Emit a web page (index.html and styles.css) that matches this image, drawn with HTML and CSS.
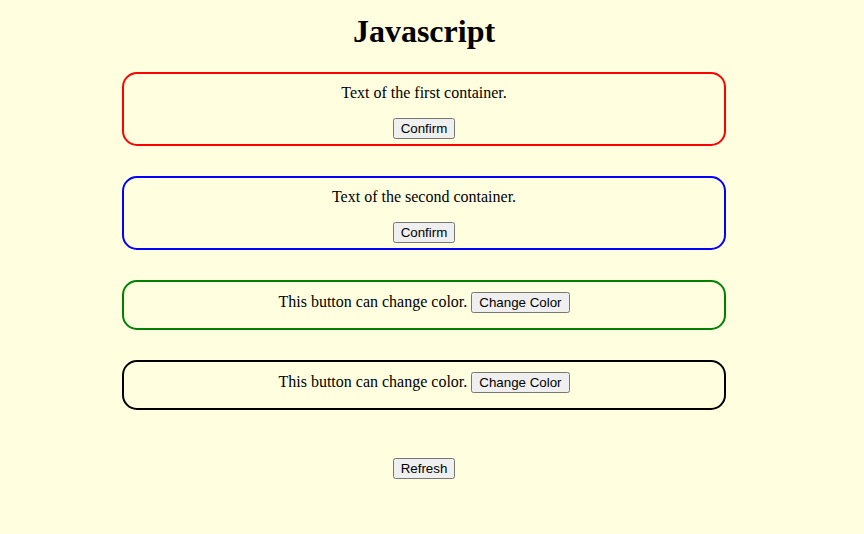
FILE: index.html
```html
<!DOCTYPE html>
<html lang="en">
<head>
<meta charset="utf-8">
<title>Javascript</title>
<link rel="stylesheet" href="styles.css">
</head>
<body>
<div class="page">
  <h1 class="title">Javascript</h1>
  <div class="box box-red">
    <p class="box-text">Text of the first container.</p>
    <div class="box-actions"><button class="btn" type="button">Confirm</button></div>
  </div>
  <div class="box box-blue">
    <p class="box-text">Text of the second container.</p>
    <div class="box-actions"><button class="btn" type="button">Confirm</button></div>
  </div>
  <div class="box box-green box-inline">
    <p class="box-line">This button can change color. <button class="btn" type="button">Change Color</button></p>
  </div>
  <div class="box box-black box-inline">
    <p class="box-line">This button can change color. <button class="btn" type="button">Change Color</button></p>
  </div>
  <div class="refresh">
    <button class="btn" type="button">Refresh</button>
  </div>
</div>
</body>
</html>
```

FILE: styles.css
```css
html, body {
  margin: 0;
  padding: 0;
  background: #ffffe0;
}

body {
  font-family: "Liberation Serif", "Times New Roman", serif;
  font-size: 16px;
  color: #000;
}

.page {
  width: 848px;
  text-align: center;
}

.title {
  font-family: "Liberation Serif", "Times New Roman", serif;
  font-size: 32px;
  font-weight: bold;
  margin: 13px 0 22px;
}

.box {
  width: 600px;
  margin: 0 auto 30px;
  border: 2px solid #000;
  border-radius: 15px;
  padding: 10px 0 5px;
}

.box-red { border-color: #ff0000; }
.box-blue { border-color: #0000ff; }
.box-green { border-color: #008000; }
.box-black { border-color: #000000; }

.box-inline {
  padding: 10px 0 15px;
}

.box-text {
  margin: 0 0 16px;
}

.box-line {
  margin: 0;
}

.btn {
  font-family: "Liberation Sans", Arial, sans-serif;
  font-size: 13.333px;
  color: #000;
}

.refresh {
  margin-top: 48px;
}
```
